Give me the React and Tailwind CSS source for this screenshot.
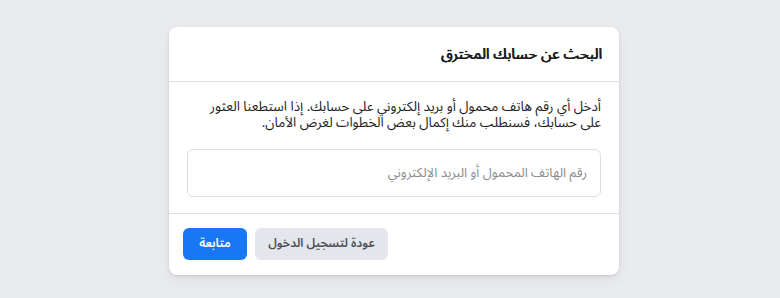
export default function App() {
  return (
    <div className="min-h-[298px] bg-[#e9ebee] pt-[27px] font-['Noto_Sans_Arabic','Liberation_Sans',Arial,sans-serif]">
      <div
        dir="rtl"
        className="ml-[169px] w-[450px] rounded-lg bg-white shadow-[0_1px_3px_rgba(0,0,0,0.12),0_6px_14px_rgba(0,0,0,0.05)]"
      >
        {/* العنوان */}
        <div className="flex h-[55px] items-center border-b border-[#dddfe2] pr-[17px] pl-4">
          <h2 className="text-[15px] font-normal leading-5 text-[#1c1e21] [text-shadow:0.45px_0_0_#1c1e21,-0.2px_0_0_#1c1e21]">
            البحث عن حسابك المخترق
          </h2>
        </div>

        {/* المحتوى */}
        <div className="px-[18px] pt-[17px] pb-[16px]">
          <p className="text-[13.4px] leading-[16px] text-[#1c1e21]">
            أدخل أي رقم هاتف محمول أو بريد إلكتروني على حسابك. إذا استطعنا العثور على حسابك، فسنطلب منك إكمال بعض الخطوات لغرض الأمان.
          </p>
          <input
            type="text"
            placeholder="رقم الهاتف المحمول أو البريد الإلكتروني"
            className="mt-[18px] block h-[48px] w-full rounded-md border border-[#dddfe2] px-[13px] text-[13px] text-[#1c1e21] outline-none placeholder:text-[#8a8d91]"
          />
        </div>

        {/* الأزرار */}
        <div className="flex justify-end gap-2 border-t border-[#dddfe2] px-[14px] pt-[14px] pb-[15px]">
          <button
            type="button"
            className="h-8 w-[133px] rounded-md bg-[#e4e6eb] text-[12px] font-semibold text-[#4b4f56]"
          >
            عودة لتسجيل الدخول
          </button>
          <button
            type="button"
            className="h-8 w-[64px] rounded-md bg-[#1877f2] text-[12px] font-semibold text-white"
          >
            متابعة
          </button>
        </div>
      </div>
    </div>
  );
}
